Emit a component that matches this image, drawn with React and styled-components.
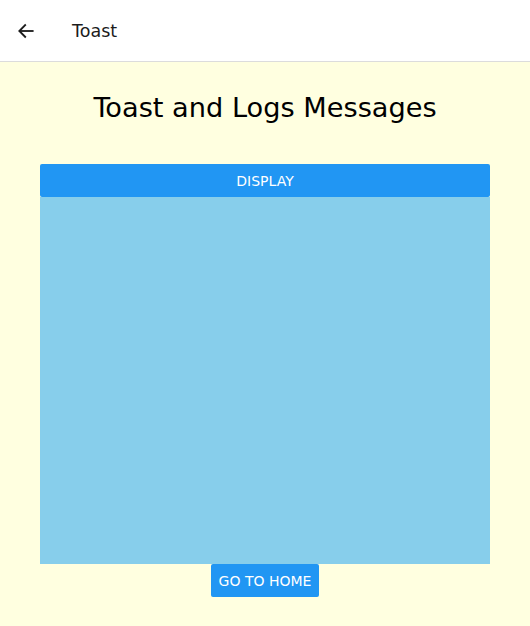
import styled, { createGlobalStyle } from 'styled-components';

const GlobalStyle = createGlobalStyle`
  html, body {
    margin: 0;
    padding: 0;
    height: 100%;
  }
  body {
    font-family: 'DejaVu Sans', sans-serif;
  }
  #root {
    height: 100%;
  }
`

const Screen = styled.div`
  display: flex;
  flex-direction: column;
  height: 100%;
`

const Header = styled.header`
  height: 61px;
  flex-shrink: 0;
  display: flex;
  align-items: center;
  background: #ffffff;
  border-bottom: 1px solid #dcdcdc;
`

const BackButton = styled.button`
  width: 52px;
  height: 52px;
  display: flex;
  align-items: center;
  justify-content: center;
  background: none;
  border: none;
  padding: 0;
  color: #1c1c1c;
`

const HeaderTitle = styled.span`
  margin-left: 20px;
  font-size: 17.5px;
  color: #1c1c1c;
`

const Body = styled.main`
  flex: 1;
  background: #ffffe0;
  display: flex;
  flex-direction: column;
  align-items: center;
  padding: 0 40px;
`

const Title = styled.h1`
  margin: 28px 0 38px;
  font-size: 27.2px;
  font-weight: normal;
  color: #000;
  line-height: 36px;
`

const Panel = styled.section`
  align-self: stretch;
  display: flex;
  flex-direction: column;
`

const Button = styled.button`
  background: #2196f3;
  color: #fff;
  border: none;
  border-radius: 2px;
  height: 33px;
  font-family: 'DejaVu Sans', sans-serif;
  font-size: 14px;
  text-transform: uppercase;
  padding: ${p => (p.$wide ? '0' : '0 8px')};
  cursor: pointer;
`

const Display = styled.div`
  height: 367px;
  background: #87ceeb;
`

const Arrow = () => (
  <svg width="20" height="20" viewBox="0 0 24 24" fill="none" stroke="currentColor" strokeWidth="2.2" strokeLinecap="square">
    <path d="M20 12H5" />
    <path d="M11 5l-7 7 7 7" strokeLinejoin="miter" />
  </svg>
)

const App = () => {
  return (
    <>
      <GlobalStyle />
      <Screen>
        <Header>
          <BackButton aria-label="back"><Arrow /></BackButton>
          <HeaderTitle>Toast</HeaderTitle>
        </Header>
        <Body>
          <Title>Toast and Logs Messages</Title>
          <Panel>
            <Button $wide>Display</Button>
            <Display />
          </Panel>
          <Button>Go to Home</Button>
        </Body>
      </Screen>
    </>
  )
}

export default App;
